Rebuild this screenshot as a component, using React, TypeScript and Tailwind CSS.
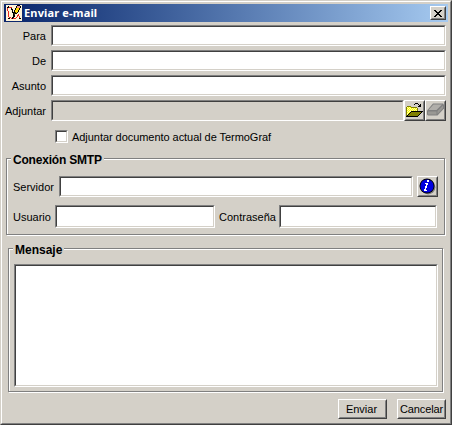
import type { ReactNode } from 'react';

const sunken =
  'shrink-0 border border-t-[#808080] border-l-[#808080] border-r-white border-b-white';
const sunkenInner =
  'h-full w-full border border-t-[#404040] border-l-[#404040] border-r-[#d4d0c8] border-b-[#d4d0c8]';

function Field({ className, disabled = false }: { className: string; disabled?: boolean }) {
  return (
    <div className={`${sunken} ${className}`}>
      <div className={`${sunkenInner} ${disabled ? 'bg-[#d4d0c8]' : 'bg-white'}`} />
    </div>
  );
}

function Raised({ className, children }: { className: string; children: ReactNode }) {
  return (
    <div
      className={`shrink-0 border border-t-white border-l-white border-r-[#404040] border-b-[#404040] ${className}`}
    >
      <div className="flex h-full w-full items-center justify-center border border-t-[#d4d0c8] border-l-[#d4d0c8] border-r-[#808080] border-b-[#808080] bg-[#d4d0c8]">
        {children}
      </div>
    </div>
  );
}

function Group({ title, className, children }: { title: ReactNode; className: string; children: ReactNode }) {
  return (
    <section className={`relative border border-[#808080] shadow-[1px_1px_0_white,inset_1px_1px_0_white] ${className}`}>
      {title}
      {children}
    </section>
  );
}

function Row({ label, children }: { label: string; children: ReactNode }) {
  return (
    <div className="flex h-[21px] items-center">
      <div className="flex w-[47px] shrink-0 justify-end pt-[2px] pr-[5px]">
        <span>{label}</span>
      </div>
      {children}
    </div>
  );
}

function AppIcon() {
  return (
    <svg width="16" height="16" viewBox="0 0 16 16" shapeRendering="crispEdges" className="shrink-0">
      <path d="M0 0h16v16H0z" fill="#fff4d8" />
      <path d="M1 3h1v3H1zM2 6h1v6H2zM3 2h3v1H3zM3 12h2v1H3zM5 13h5v1H5zM10 12h1v1h-1zM11 10h1v2h-1zM12 9h1v2h-1zM13 11h1v3h-1z" fill="#e82820" />
      <path d="M1 2h2v1H1zM2 1h1v1H2zM2 13h2v1H2zM5 3h1v2H5zM6 4h1v4H6zM7 7h1v6H7zM6 12h1v2H6zM8 10h1v2H8zM8 5h1v4H8zM9 3h1v2H9zM10 1h1v2h-1zM11 0h3v1h-3zM14 1h1v2h-1zM13 3h1v2h-1zM12 5h1v2h-1zM11 7h1v1h-1zM9 8h2v1H9zM13 13h2v1h-2z" fill="#000" />
      <path d="M10 3h3v2h-1v2h-1v1H9V5h1z" fill="#ffd800" />
      <path d="M11 1h3v2h-3z" fill="#e89890" />
      <path d="M8 8h1v2H8zM9 7h1v1H9z" fill="#403000" />
    </svg>
  );
}

function FolderIcon() {
  return (
    <svg width="17" height="17" viewBox="0 0 17 17" shapeRendering="crispEdges">
      <path d="M1 5h4v1h6v4H1z" fill="#ffffa8" />
      <path d="M1 10h4v1H4v1H3v1H2v1H1z" fill="#ffffa8" />
      <path d="M2 5h1v1H2zM4 5h1v1H4zM1 6h1v1H1zM3 6h1v1H3zM5 6h1v1H5zM7 6h1v1H7zM9 6h1v1H9zM2 7h1v1H2zM4 7h1v1H4zM6 7h1v1H6zM8 7h1v1H8zM10 7h1v1h-1zM1 8h1v1H1zM3 8h1v1H3zM5 8h1v1H5zM7 8h1v1H7zM9 8h1v1H9zM2 9h1v1H2zM1 10h1v1H1zM3 10h1v1H3zM2 11h1v1H2z" fill="#ffff00" />
      <path d="M1 4h4v1H1zM0 5h1v9H0zM5 5h6v1H5zM11 6h1v3h-1z" fill="#808000" />
      <path d="M5 9h12v1H5zM4 10h1v1H4zM3 11h1v1H3zM2 12h1v1H2zM1 13h1v1H1zM0 14h12v1H0zM12 13h1v1h-1zM13 12h1v1h-1zM14 11h1v1h-1zM15 10h1v1h-1z" fill="#000" />
      <path d="M5 10h10v1h-1v1h-1v1h-1v1H2v-1h1v-1h1v-1h1z" fill="#808000" />
      <path d="M8 2h1v1H8zM9 1h3v1H9zM12 2h1v1h-1zM14 2h1v3h-3V4h1V3h1z" fill="#000" />
    </svg>
  );
}

function EraserIcon() {
  return (
    <svg width="17" height="17" viewBox="0 0 17 17">
      <path d="M6 1.500h10l1 1v4L10.500 13.500H1l-1-1V8.500z" fill="#808080" />
      <path d="M6.500 2.500h8.500l-5.500 5.500H1.500z" fill="#b0aeaa" />
      <path d="M1 9.500h8.500v3H1zM10.500 9l5.500-5.500v2.500l-5.500 6z" fill="#999894" />
    </svg>
  );
}

function InfoIcon() {
  return (
    <svg width="17" height="17" viewBox="0 0 17 17">
      <circle cx="9.200" cy="9.200" r="7.200" fill="#808080" />
      <circle cx="8" cy="8" r="7.500" fill="#000" />
      <circle cx="8" cy="8" r="6.600" fill="#0000e0" />
      <path d="M8 2h2v2H8zM6 5h3v2H8v3H7v2h1v1H5v-2h1V8h1V6H6z" fill="#fff" shapeRendering="crispEdges" />
    </svg>
  );
}

export default function App() {
  return (
    <main className="h-[425px] w-[452px] overflow-hidden border border-t-[#d4d0c8] border-l-[#d4d0c8] border-r-[#404040] border-b-[#404040] bg-[#d4d0c8] font-['Liberation_Sans',Arial,sans-serif] text-[11px] leading-[13px] whitespace-nowrap text-black">
      <div className="h-full border border-t-white border-l-white border-r-[#808080] border-b-[#808080] p-[2px]">
        <header className="flex h-[18px] items-center bg-linear-to-r from-[#0a246a] to-[#a6caf0] pr-[2px] pl-[2px]">
          <AppIcon />
          <span className="ml-[2px] grow pb-px font-['Noto_Sans',sans-serif] font-bold tracking-[0.16px] text-white">Enviar e-mail</span>
          <Raised className="h-[14px] w-4">
            <svg width="8" height="7" viewBox="0 0 8 7" shapeRendering="crispEdges">
              <path d="M0 0h2v1h1v1h2V1h1V0h2v1H7v1H6v1H5v1h1v1h1v1h1v1H6V6H5V5H3v1H2v1H0V6h1V5h1V4h1V3H2V2H1V1H0z" />
            </svg>
          </Raised>
        </header>

        <div className="mt-[3px] flex flex-col gap-1">
          <Row label="Para"><Field className="h-[21px] w-[395px]" /></Row>
          <Row label="De"><Field className="h-[21px] w-[395px]" /></Row>
          <Row label="Asunto"><Field className="h-[21px] w-[395px]" /></Row>
          <Row label="Adjuntar">
            <Field className="h-[21px] w-[353px]" disabled />
            <Raised className="h-[21px] w-[21px]"><FolderIcon /></Raised>
            <Raised className="h-[21px] w-[21px]"><EraserIcon /></Raised>
          </Row>
        </div>

        <div className="mt-[9px] ml-[51px] flex h-[13px] items-center">
          <Field className="h-[13px] w-[13px]" />
          <span className="ml-1 pt-[2px] tracking-[-0.05px]">Adjuntar documento actual de TermoGraf</span>
        </div>

        <Group
          className="mt-[15px] ml-[2px] h-[77px] w-[439px]"
          title={<h2 className="absolute -top-[6px] left-[4px] bg-[#d4d0c8] px-[2px] text-[12px] leading-[15px] font-bold tracking-[-0.2px]">Conexión SMTP</h2>}
        >
          <div className="flex h-[38px] items-end pl-[6px]">
            <span className="mb-[3px] w-[46px] shrink-0">Servidor</span>
            <Field className="h-[21px] w-[354px]" />
            <Raised className="ml-1 h-[21px] w-[21px]"><InfoIcon /></Raised>
          </div>
          <div className="mt-2 flex h-[23px] items-center pl-[6px]">
            <span className="w-[42px] shrink-0 pt-[2px]">Usuario</span>
            <Field className="h-[23px] w-[160px]" />
            <span className="ml-1 w-[60px] shrink-0 pt-[2px]">Contraseña</span>
            <Field className="h-[23px] w-[158px]" />
          </div>
        </Group>

        <Group
          className="mt-[13px] ml-1 h-[144px] w-[435px] pt-[15px] pl-[5px]"
          title={<h2 className="absolute -top-[6px] left-[4px] bg-[#d4d0c8] px-[2px] text-[12px] leading-[15px] font-bold">Mensaje</h2>}
        >
          <Field className="h-[123px] w-[424px]" />
        </Group>

        <footer className="mt-[7px] flex justify-end gap-[10px] pr-[2px]">
          <Raised className="h-5 w-[49px]"><span className="pr-[2px]">Enviar</span></Raised>
          <Raised className="h-5 w-[49px]"><span className="tracking-[-0.15px]">Cancelar</span></Raised>
        </footer>
      </div>
    </main>
  );
}
